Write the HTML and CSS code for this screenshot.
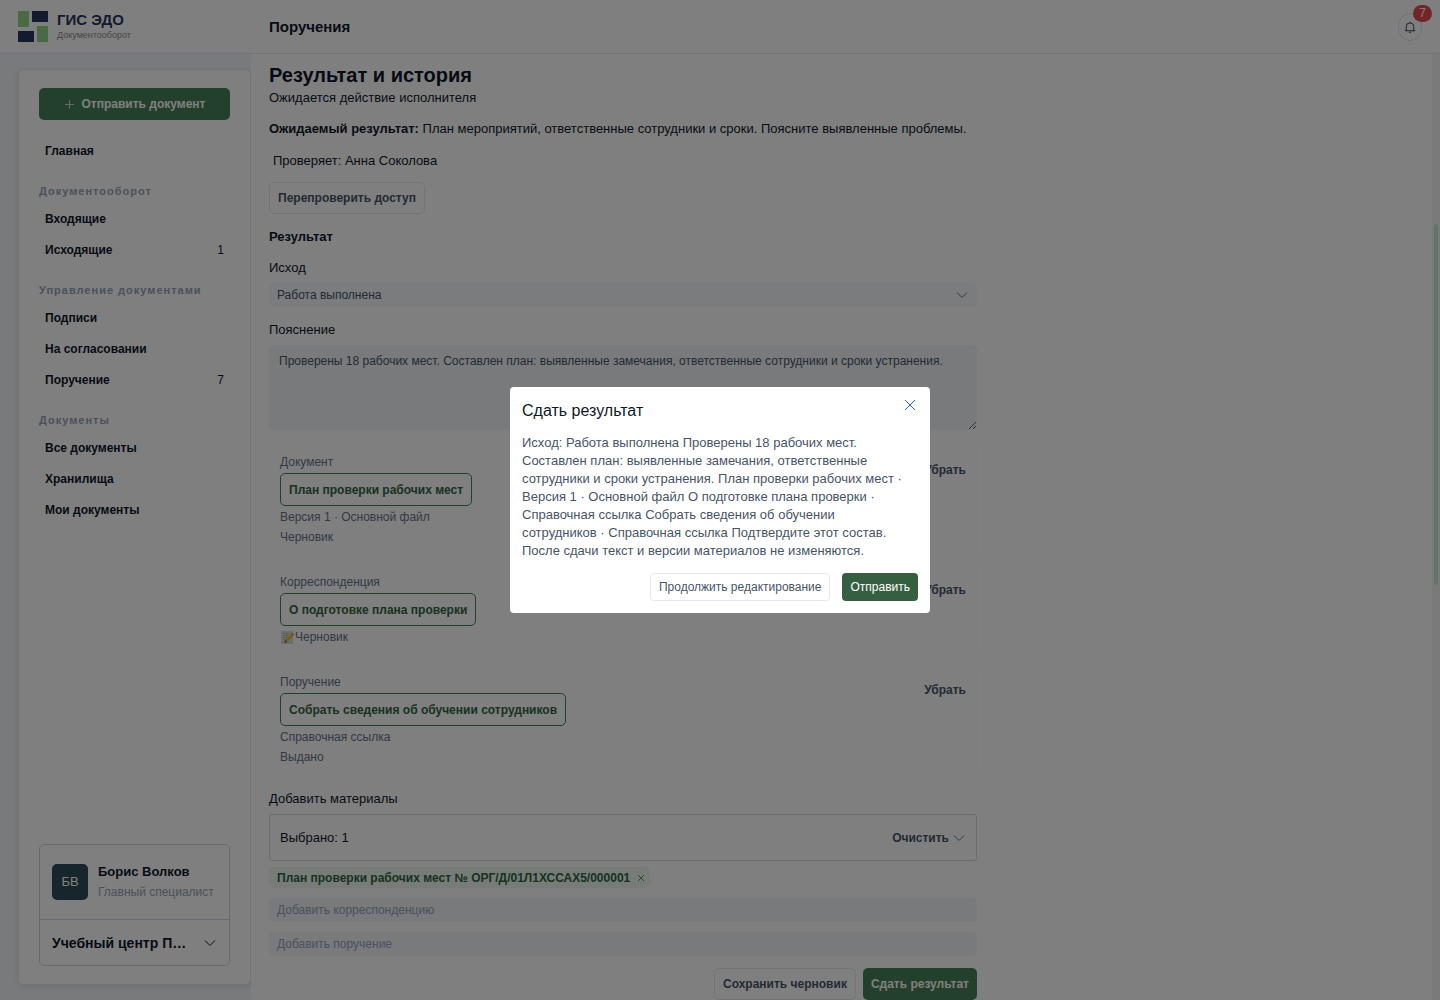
FILE: index.html
```html
<!DOCTYPE html>
<html lang="ru">
<head>
  <meta charset="UTF-8">
  <meta name="viewport" content="width=device-width, initial-scale=1.0">
  <title>ГИС ЭДО - Поручения</title>
  <link rel="stylesheet" href="styles.css">
</head>
<body>
  <header class="topbar">
    <a class="brand" href="#">
      <svg width="30" height="31" viewBox="0 0 30 31" aria-hidden="true">
        <path fill="#92d487" d="M0 0h11v16H0zM19 15h11v16H19z"/>
        <path fill="#24375e" d="M14 0h16v11H14zM0 20h16v11H0z"/>
      </svg>
      <span class="brand-text">
        <strong>ГИС ЭДО</strong>
        <small>Документооборот</small>
      </span>
    </a>
    <span class="page-title">Поручения</span>
    <button class="bell" type="button" aria-label="Уведомления">
      <svg width="12" height="12" viewBox="0 0 16 16" fill="none" stroke="currentColor" stroke-width="1.3" aria-hidden="true">
        <path d="M1 13h14M3 13V7.500a5 5 0 0 1 10 0V13M8 2.500V1M6.500 15h3"/>
      </svg>
      <span class="bell-count">7</span>
    </button>
  </header>

  <div class="layout">
    <aside class="sidebar">
      <div class="side-card">
        <button class="btn btn-green send" type="button">
          <svg width="11" height="11" viewBox="0 0 11 11" fill="none" stroke="currentColor" stroke-opacity="0.7" aria-hidden="true"><path d="M5.500 1v9M1 5.500h9"/></svg>
          Отправить документ
        </button>
        <nav class="nav">
          <a href="#">Главная</a>
          <h3>Документооборот</h3>
          <a href="#">Входящие</a>
          <a href="#">Исходящие <span>1</span></a>
          <h3>Управление документами</h3>
          <a href="#">Подписи</a>
          <a href="#">На согласовании</a>
          <a href="#">Поручение <span>7</span></a>
          <h3>Документы</h3>
          <a href="#">Все документы</a>
          <a href="#">Хранилища</a>
          <a href="#">Мои документы</a>
        </nav>
        <div class="user">
          <div class="user-row">
            <span class="avatar">БВ</span>
            <div>
              <strong>Борис Волков</strong>
              <small>Главный специалист</small>
            </div>
          </div>
          <button class="org" type="button">
            <span>Учебный центр П…</span>
            <svg width="12" height="12" viewBox="0 0 12 12" fill="none" stroke="currentColor" aria-hidden="true"><path d="M1 3.500l5 5 5-5"/></svg>
          </button>
        </div>
      </div>
    </aside>

    <main class="main">
      <div class="content">
        <h1>Результат и история</h1>
        <p>Ожидается действие исполнителя</p>
        <p class="expected"><strong>Ожидаемый результат:</strong> План мероприятий, ответственные сотрудники и сроки. Поясните выявленные проблемы.</p>
        <p class="checker">Проверяет: Анна Соколова</p>
        <button class="btn btn-line" type="button">Перепроверить доступ</button>

        <form class="form">
          <h2>Результат</h2>
          <label for="outcome">Исход</label>
          <div class="select">
            <select id="outcome">
              <option>Работа выполнена</option>
            </select>
            <svg width="12" height="12" viewBox="0 0 12 12" fill="none" stroke="currentColor" aria-hidden="true"><path d="M1 3.500l5 5 5-5"/></svg>
          </div>
          <label for="note">Пояснение</label>
          <textarea id="note">Проверены 18 рабочих мест. Составлен план: выявленные замечания, ответственные сотрудники и сроки устранения.</textarea>

          <div class="materials">
            <div class="material">
              <div>
                <span>Документ</span>
                <button class="btn btn-outline" type="button">План проверки рабочих мест</button>
                <span>Версия 1 · Основной файл</span>
                <span>Черновик</span>
              </div>
              <button class="remove" type="button">Убрать</button>
            </div>
            <div class="material">
              <div>
                <span>Корреспонденция</span>
                <button class="btn btn-outline" type="button">О подготовке плана проверки</button>
                <span class="draft">
                  <svg width="15" height="15" viewBox="0 0 15 15" aria-hidden="true">
                    <path fill="#dcdcdc" d="M1 1h12v13H1z"/>
                    <path stroke="#b9b9b9" d="M3 3.500h6M3 5.500h5M3 7.500h4M3 9.500h2"/>
                    <path fill="#f0b93c" d="M11 3.500l2.500 2.200-6 6.300-2.500-2.200z"/>
                    <path fill="#e2a07c" d="M11 3.500l1.200-1.200 2.500 2.200-1.200 1.200z"/>
                    <path fill="#8a7a5a" d="M5 9.800L7.500 12 4 13z"/>
                  </svg>Черновик
                </span>
              </div>
              <button class="remove" type="button">Убрать</button>
            </div>
            <div class="material">
              <div>
                <span>Поручение</span>
                <button class="btn btn-outline" type="button">Собрать сведения об обучении сотрудников</button>
                <span>Справочная ссылка</span>
                <span>Выдано</span>
              </div>
              <button class="remove" type="button">Убрать</button>
            </div>
          </div>

          <label for="letter">Добавить материалы</label>
          <div class="picked">
            <span>Выбрано: 1</span>
            <button class="remove" type="button">Очистить</button>
            <svg width="12" height="12" viewBox="0 0 12 12" fill="none" stroke="currentColor" aria-hidden="true"><path d="M1 3.500l5 5 5-5"/></svg>
          </div>
          <span class="tag">
            План проверки рабочих мест № ОРГ/Д/01Л1ХССАХ5/000001
            <button type="button" aria-label="Удалить">
              <svg width="8" height="8" viewBox="0 0 8 8" fill="none" stroke="currentColor" aria-hidden="true"><path d="M1 1l6 6M7 1L1 7"/></svg>
            </button>
          </span>
          <input id="letter" class="field" type="text" placeholder="Добавить корреспонденцию">
          <input class="field" type="text" placeholder="Добавить поручение" aria-label="Добавить поручение">
          <div class="actions">
            <button class="btn btn-line" type="button">Сохранить черновик</button>
            <button class="btn btn-green" type="button">Сдать результат</button>
          </div>
        </form>
      </div>
      <div class="scrollbar"><div class="thumb"></div></div>
    </main>
  </div>

  <div class="overlay">
    <section class="modal" role="dialog" aria-modal="true" aria-labelledby="modal-title">
      <div class="modal-head">
        <h2 id="modal-title">Сдать результат</h2>
        <button class="close" type="button" aria-label="Закрыть">
          <svg width="10" height="10" viewBox="0 0 10 10" fill="none" stroke="currentColor" aria-hidden="true"><path d="M0 0l10 10M10 0L0 10"/></svg>
        </button>
      </div>
      <p>Исход: Работа выполнена Проверены 18 рабочих мест. Составлен план: выявленные замечания, ответственные сотрудники и сроки устранения. План проверки рабочих мест · Версия 1 · Основной файл О подготовке плана проверки · Справочная ссылка Собрать сведения об обучении сотрудников · Справочная ссылка Подтвердите этот состав. После сдачи текст и версии материалов не изменяются.</p>
      <div class="modal-actions">
        <button class="modal-btn" type="button">Продолжить редактирование</button>
        <button class="modal-btn confirm" type="button">Отправить</button>
      </div>
    </section>
  </div>
</body>
</html>
```
FILE: styles.css
```css
* {
  box-sizing: border-box;
}
body {
  margin: 0;
  height: 100vh;
  display: flex;
  flex-direction: column;
  overflow: hidden;
  background: #f1f5f9;
  color: #0f172a;
  font-family: "Liberation Sans", Arial, sans-serif;
  font-size: 13px;
  line-height: 20px;
}
h1, h2, h3, p {
  margin: 0;
}
button, input, select, textarea {
  font-family: inherit;
}
button {
  padding: 0;
  border: 0;
  background: none;
  cursor: pointer;
}
a {
  color: inherit;
  text-decoration: none;
}

/* top bar */
.topbar {
  display: flex;
  align-items: center;
  flex: none;
  height: 54px;
  padding: 0 18px;
  background: #fff;
  border-bottom: 1px solid #e2e8f0;
}
.brand {
  display: flex;
  gap: 9px;
  width: 251px;
}
.brand-text {
  display: flex;
  flex-direction: column;
}
.brand strong {
  font-size: 15px;
  line-height: 18px;
  color: #24375e;
}
.brand small {
  font-size: 9px;
  line-height: 12px;
  color: #8c8c8c;
}
.page-title {
  flex: 1;
  font-size: 15px;
  font-weight: bold;
}
.bell {
  position: relative;
  display: flex;
  align-items: center;
  justify-content: center;
  width: 24px;
  height: 28px;
  border: 1px solid #e2e8f0;
  border-radius: 50%;
  color: #334155;
}
.bell-count {
  position: absolute;
  top: -9px;
  right: -11px;
  width: 19px;
  height: 17px;
  border-radius: 9px;
  background: #e5484d;
  color: #fff;
  font-size: 12px;
  line-height: 17px;
}

/* sidebar */
.layout {
  display: flex;
  flex: 1;
  min-height: 0;
}
.sidebar {
  display: flex;
  flex: none;
  width: 251px;
  padding: 15px 0 15px 18px;
}
.side-card {
  display: flex;
  flex-direction: column;
  flex: 1;
  min-width: 0;
  padding: 18px 20px;
  background: #fff;
  border: 1px solid #e2e8f0;
  border-radius: 5px;
  box-shadow: 0 2px 6px rgba(15, 23, 42, 0.1);
}
.btn {
  height: 32px;
  padding: 0 8px;
  border: 1px solid transparent;
  border-radius: 5px;
  font-size: 12px;
  font-weight: bold;
}
.btn-green {
  border: 0;
  background: #458056;
  color: #fff;
}
.btn-line {
  border-color: #e2e8f0;
  color: #475569;
}
.btn-outline {
  height: 33px;
  border-color: #458056;
  color: #2f6540;
}
.send {
  display: flex;
  align-items: center;
  justify-content: center;
  gap: 7px;
  flex: none;
}
.nav {
  flex: 1;
  padding-top: 16px;
}
.nav a {
  display: flex;
  justify-content: space-between;
  padding: 0 6px;
  font-size: 12px;
  font-weight: bold;
  line-height: 31px;
}
.nav a span {
  font-weight: normal;
}
.nav h3 {
  padding: 17px 0 6px;
  color: #94a3b8;
  font-size: 11px;
  font-weight: bold;
  line-height: 14px;
  letter-spacing: 1px;
}
.user {
  border: 1px solid #cbd5e1;
  border-radius: 5px;
}
.user-row {
  display: flex;
  align-items: center;
  gap: 10px;
  height: 74px;
  padding: 0 12px;
  white-space: nowrap;
}
.user-row strong, .user-row small {
  display: block;
  line-height: 21px;
}
.user-row small {
  font-size: 12px;
  color: #94a3b8;
}
.avatar {
  flex: none;
  width: 36px;
  height: 36px;
  border-radius: 5px;
  background: #2f4a5b;
  color: #fff;
  line-height: 36px;
  text-align: center;
}
.org {
  display: flex;
  align-items: center;
  justify-content: space-between;
  width: 100%;
  height: 46px;
  padding: 0 13px 0 12px;
  border-top: 1px solid #cbd5e1;
  color: #0f172a;
  font-size: 14px;
  font-weight: bold;
  white-space: nowrap;
}

/* main column */
.main {
  display: flex;
  justify-content: space-between;
  flex: 1;
  overflow: hidden;
  background: #fff;
}
.content {
  width: 726px;
  padding: 9px 0 0 18px;
}
h1 {
  margin-bottom: 1px;
  font-size: 20px;
  line-height: 24px;
}
.expected {
  margin-top: 11px;
  white-space: nowrap;
}
.checker {
  margin: 12px 0 11px;
  padding-left: 4px;
}
.form {
  display: flex;
  flex-direction: column;
}
.form h2 {
  margin: 13px 0 11px;
  font-size: 13px;
}
.select {
  display: flex;
  align-items: center;
  margin: 5px 0 13px;
  padding-right: 9px;
  border-radius: 5px;
  background: #f5f8fb;
  color: #64748b;
}
.select select {
  flex: 1;
  height: 24px;
  padding: 0 8px;
  border: 0;
  background: none;
  color: #475569;
  font-size: 12px;
  appearance: none;
}
textarea {
  height: 85px;
  margin: 5px 0 13px;
  padding: 6px 10px;
  border: 0;
  border-radius: 5px;
  background: #f1f5f9;
  color: #475569;
  font-size: 12px;
  line-height: 20px;
}
.materials {
  display: flex;
  flex-direction: column;
  gap: 7px;
  margin-bottom: 13px;
}
.material {
  display: flex;
  align-items: flex-start;
  justify-content: space-between;
  padding: 8px 10px;
  border: 1px solid #f8fafc;
  border-radius: 5px;
  color: #64748b;
  font-size: 12px;
}
.material span {
  display: block;
}
.material .btn {
  display: block;
  margin: 1px 0;
}
.material .draft {
  display: flex;
  align-items: center;
}
.remove {
  color: #475569;
  font-size: 12px;
  font-weight: bold;
  line-height: 36px;
}
.picked {
  display: flex;
  align-items: center;
  gap: 4px;
  height: 47px;
  margin: 5px 0 6px;
  padding: 0 11px 0 10px;
  border: 1px solid #d9d9d9;
  border-radius: 3px;
}
.picked span {
  flex: 1;
}
.picked svg {
  color: #64748b;
}
.tag {
  display: flex;
  align-items: center;
  align-self: flex-start;
  gap: 7px;
  height: 21px;
  padding: 0 5px 0 8px;
  border-radius: 5px;
  background: #f0f9f2;
  color: #2f6540;
  font-size: 12px;
  font-weight: bold;
}
.tag button {
  display: flex;
  color: #64906f;
}
.field {
  height: 24px;
  margin-top: 10px;
  padding: 0 8px;
  border: 0;
  border-radius: 5px;
  background: #f1f5f9;
  font-size: 12px;
}
.field::placeholder {
  color: #94a3b8;
}
.actions {
  display: flex;
  justify-content: flex-end;
  gap: 7px;
  margin-top: 12px;
}
.scrollbar {
  width: 8px;
  padding: 170px 2px 0;
  background: #f1f5f9;
}
.thumb {
  height: 361px;
  border-radius: 2px;
  background: #c8e6c9;
}

/* modal */
.overlay {
  position: fixed;
  inset: 0;
  display: flex;
  align-items: center;
  justify-content: center;
  background: rgba(0, 0, 0, 0.5);
}
.modal {
  width: 420px;
  padding: 12px;
  border-radius: 4px;
  background: #fff;
}
.modal-head {
  display: flex;
  align-items: flex-start;
  justify-content: space-between;
}
.modal h2 {
  font-size: 16px;
  font-weight: normal;
  line-height: 24px;
}
.close {
  display: flex;
  padding: 1px 3px;
  color: #2563eb;
}
.modal p {
  margin: 11px 0 13px;
  padding-right: 6px;
  color: #475569;
  line-height: 18px;
}
.modal-actions {
  display: flex;
  justify-content: flex-end;
  gap: 12px;
}
.modal-btn {
  height: 28px;
  padding: 0 8px;
  border: 1px solid #e2e8f0;
  border-radius: 4px;
  color: #475569;
  font-size: 12px;
}
.confirm {
  border: 0;
  background: #365f41;
  color: #fff;
}
```
